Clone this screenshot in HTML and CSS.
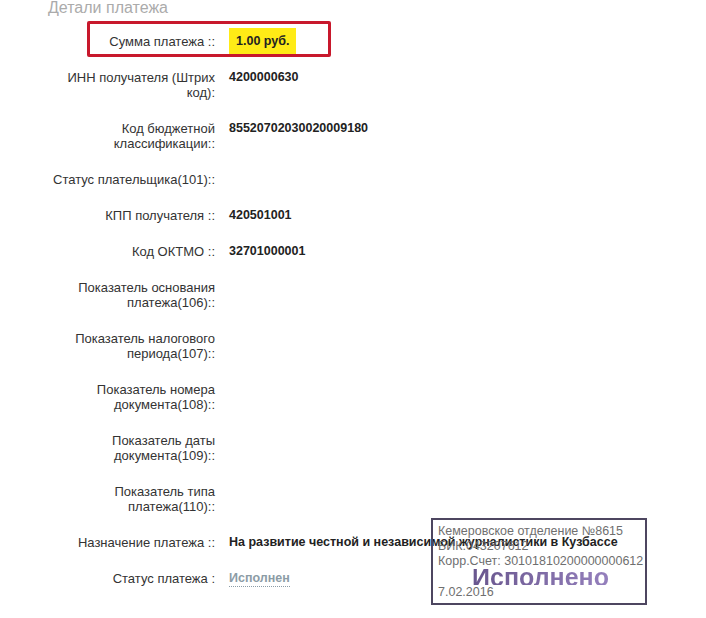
FILE: index.html
```html
<!DOCTYPE html>
<html lang="ru">
<head>
    <meta charset="UTF-8">
    <meta name="viewport" content="width=device-width, initial-scale=1.0">
    <title>Детали платежа</title>
    <link rel="stylesheet" href="styles.css">
</head>
<body>

    <div class="page">
        <h2 class="title">Детали платежа</h2>

        <div class="details">
            <div class="row row-sum">
                <div class="label">Сумма платежа ::</div>
                <div class="value sum">1.00 руб.</div>
            </div>

            <div class="row">
                <div class="label">ИНН получателя (Штрих код):</div>
                <div class="value">4200000630</div>
            </div>

            <div class="row">
                <div class="label">Код бюджетной классификации::</div>
                <div class="value">85520702030020009180</div>
            </div>

            <div class="row">
                <div class="label">Статус плательщика(101)::</div>
                <div class="value"></div>
            </div>

            <div class="row">
                <div class="label">КПП получателя ::</div>
                <div class="value">420501001</div>
            </div>

            <div class="row">
                <div class="label">Код ОКТМО ::</div>
                <div class="value">32701000001</div>
            </div>

            <div class="row">
                <div class="label">Показатель основания платежа(106)::</div>
                <div class="value"></div>
            </div>

            <div class="row">
                <div class="label">Показатель налогового периода(107)::</div>
                <div class="value"></div>
            </div>

            <div class="row">
                <div class="label">Показатель номера документа(108)::</div>
                <div class="value"></div>
            </div>

            <div class="row">
                <div class="label">Показатель даты документа(109)::</div>
                <div class="value"></div>
            </div>

            <div class="row">
                <div class="label">Показатель типа платежа(110)::</div>
                <div class="value"></div>
            </div>

            <div class="row">
                <div class="label">Назначение платежа ::</div>
                <div class="value purpose">
                    На развитие честной и независимой журналистики в Кузбассе
                    <div class="stamp">
                        <div class="stamp-line">Кемеровское отделение №8615</div>
                        <div class="stamp-line">БИК:043207612</div>
                        <div class="stamp-line">Корр.Счет: 30101810200000000612</div>
                        <div class="stamp-done">Исполнено</div>
                        <div class="stamp-line">7.02.2016</div>
                    </div>
                </div>
            </div>

            <div class="row">
                <div class="label">Статус платежа :</div>
                <div class="value"><span class="status">Исполнен</span></div>
            </div>
        </div>
    </div>

</body>
</html>
```

FILE: styles.css
```css
body {
    font-family: "Liberation Sans", Arial, sans-serif;
    background-color: #fff;
    color: #333;
    margin: 0;
    padding: 0;
    min-height: 618px;
}

.page {
    padding-left: 48px;
    padding-bottom: 60px;
    width: 640px;
}

.title {
    font-size: 16px;
    font-weight: normal;
    color: #ababab;
    line-height: 20px;
    margin: -2px 0 16px 0;
}

.details {
    display: flex;
    flex-direction: column;
    gap: 21px;
}

.row {
    display: grid;
    grid-template-columns: 167px 1fr;
    column-gap: 14px;
    font-size: 13px;
    line-height: 15px;
}

.label {
    text-align: right;
    color: #333;
}

.value {
    font-size: 12.5px;
    font-weight: bold;
    color: #222;
}

.row-sum {
    position: relative;
}

/* red frame drawn around the sum */
.row-sum::before {
    content: "";
    position: absolute;
    left: 39px;
    top: -13px;
    width: 244px;
    height: 36px;
    box-sizing: border-box;
    border: 3px solid #c8182c;
    border-radius: 2px;
}

.sum {
    justify-self: start;
    background-color: #ffeb16;
    padding: 6px 7px 6px 7px;
    margin: -6px 0 -6px 0;
}

.purpose {
    position: relative;
    white-space: nowrap;
}

.stamp {
    position: absolute;
    left: 202px;
    top: -17px;
    width: 216px;
    height: 87px;
    box-sizing: border-box;
    border: 2px solid #4d4660;
    padding: 4px 0 0 5px;
    font-weight: normal;
    color: #6f6f6f;
}

.stamp-line {
    font-size: 12.5px;
    line-height: 15px;
}

.stamp-done {
    font-size: 25px;
    font-weight: bold;
    line-height: 16px;
    text-align: center;
    padding-right: 2px;
    color: #7a62a8;
    background: linear-gradient(90deg, #5e4c82, #a08bc9);
    -webkit-background-clip: text;
    background-clip: text;
    -webkit-text-fill-color: transparent;
}

.status {
    color: #8c9ca6;
    border-bottom: 1px dotted #8c9ca6;
    padding-bottom: 1px;
}
```
